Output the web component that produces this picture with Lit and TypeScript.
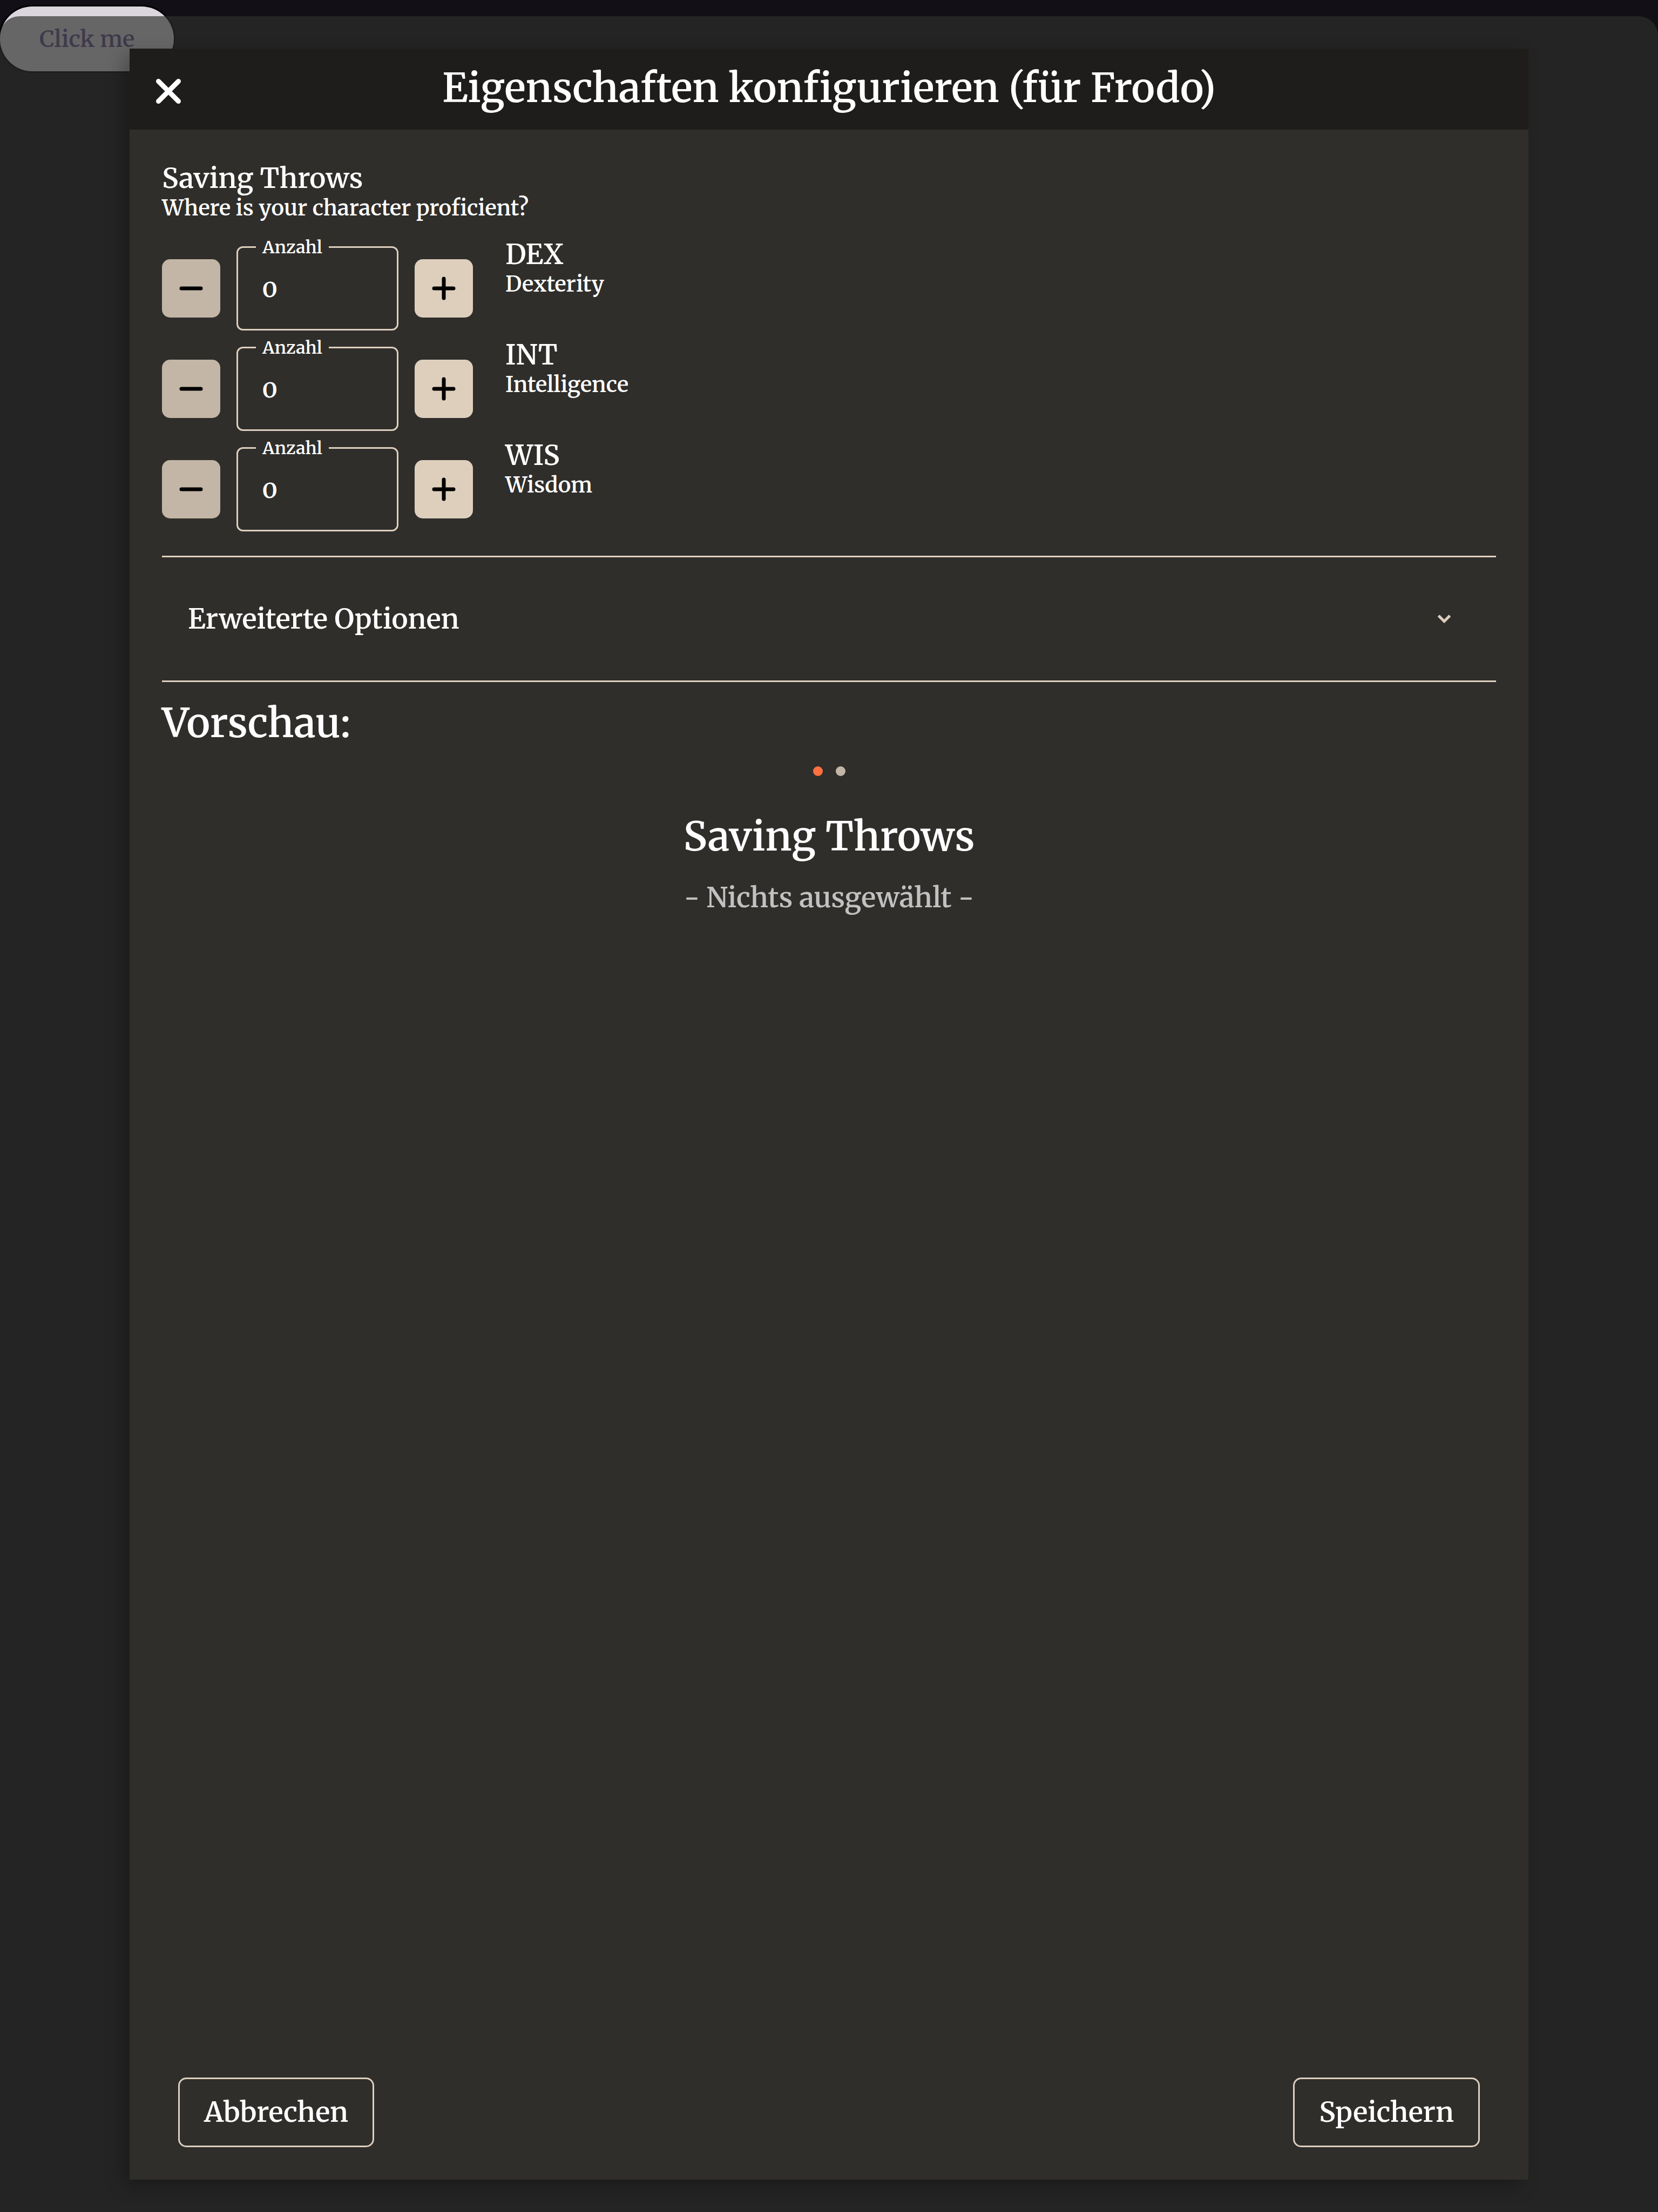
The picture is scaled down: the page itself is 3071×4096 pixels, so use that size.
import { LitElement, html, css } from "lit";
import { customElement, property, state } from "lit/decorators.js";

const FONT = css`"Merriweather", "DejaVu Serif Condensed", "DejaVu Serif", serif`;

/** A numeric field with a notched outline and buttons on both sides. */
@customElement("count-stepper")
class CountStepper extends LitElement {
  @property() name = "";
  @property({ type: Number }) value = 0;

  static styles = css`
    :host {
      display: block;
      flex: none;
    }
    .stepper {
      display: flex;
      align-items: center;
      gap: 30px;
      padding: 15px 0;
    }
    .step {
      display: flex;
      align-items: center;
      justify-content: center;
      width: 108px;
      height: 108px;
      margin: 0;
      padding: 0;
      border: 0;
      border-radius: 15px;
      background: #decfbd;
      color: #000;
    }
    .step:disabled {
      background: #c3b6a6;
    }
    .step svg {
      width: 60px;
      height: 60px;
    }
    .field {
      position: relative;
      box-sizing: border-box;
      width: 300px;
      height: 156px;
      border: 3px solid #decfbd;
      border-radius: 12px;
    }
    .label {
      position: absolute;
      top: -20px;
      left: 33px;
      padding: 0 12px;
      background: #2f2e2b;
      color: #fff;
      font: 600 32px/38px ${FONT};
    }
    .input {
      box-sizing: border-box;
      width: 100%;
      height: 100%;
      margin: 0;
      padding: 0 44px;
      border: 0;
      outline: 0;
      background: transparent;
      color: #fff;
      font: 600 46px/60px ${FONT};
      font-variant-numeric: oldstyle-nums;
    }
  `;

  private change(by: number) {
    this.value = Math.max(0, this.value + by);
  }

  render() {
    return html`
      <div class="stepper">
        <button
          class="step"
          aria-label="Weniger ${this.name}"
          ?disabled=${this.value === 0}
          @click=${() => this.change(-1)}
        >
          <svg viewBox="0 0 60 60" fill="none" stroke="currentColor" stroke-width="7" stroke-linecap="round" aria-hidden="true">
            <path d="M12 30H48" />
          </svg>
        </button>
        <div class="field">
          <label class="label" for="count">Anzahl</label>
          <input class="input" id="count" type="text" inputmode="numeric" .value=${String(this.value)} />
        </div>
        <button class="step" aria-label="Mehr ${this.name}" @click=${() => this.change(1)}>
          <svg viewBox="0 0 60 60" fill="none" stroke="currentColor" stroke-width="7" stroke-linecap="round" aria-hidden="true">
            <path d="M12 30H48M30 12V48" />
          </svg>
        </button>
      </div>
    `;
  }
}

interface Throw {
  short: string;
  long: string;
}

@customElement("app-root")
class AppRoot extends LitElement {
  @state() private expanded = false;
  @state() private page = 0;

  private throws: Throw[] = [
    { short: "DEX", long: "Dexterity" },
    { short: "INT", long: "Intelligence" },
    { short: "WIS", long: "Wisdom" },
  ];

  static styles = css`
    :host {
      display: block;
      color: #fff;
      font-family: ${FONT};
      font-weight: 600;
    }
    button {
      margin: 0;
      font-family: inherit;
      font-weight: inherit;
      color: inherit;
    }
    h1,
    h2,
    h3,
    p,
    ul {
      margin: 0;
      padding: 0;
      font-weight: inherit;
      list-style: none;
    }
    .screen {
      display: grid;
      min-height: 100vh;
      background: #121016;
    }
    .screen > * {
      grid-area: 1 / 1;
    }
    .open {
      justify-self: start;
      align-self: start;
      height: 120px;
      margin-top: 12px;
      padding: 0 73px;
      border: 0;
      border-radius: 60px;
      background: #dbd6dd;
      box-shadow: 0 0 0 3px #000;
      color: #62528a;
      font-size: 42px;
      line-height: 60px;
    }
    .sheet {
      display: flex;
      margin-top: 30px;
      padding: 60px 240px;
      border-radius: 36px 36px 0 0;
      background: rgba(45, 46, 43, 0.665);
    }
    .modal {
      display: flex;
      flex: 1;
      flex-direction: column;
      background: #2f2e2b;
      box-shadow: -12px 12px 30px rgba(0, 0, 0, 0.25);
    }
    .header {
      display: grid;
      grid-template-columns: 144px 1fr 144px;
      align-items: center;
      height: 150px;
      background: #1e1d1b;
    }
    .close {
      display: flex;
      justify-content: center;
      padding: 8px 0 0;
      border: 0;
      background: none;
    }
    .close svg {
      width: 60px;
      height: 60px;
    }
    .title {
      padding-bottom: 4px;
      text-align: center;
    }
    .large {
      font-size: 74px;
      line-height: 92px;
    }
    .medium {
      font-size: 51px;
      line-height: 60px;
    }
    .small {
      font-size: 40px;
      line-height: 51px;
    }
    .body {
      display: flex;
      flex: 1;
      flex-direction: column;
      padding: 60px;
    }
    .rows {
      margin: 30px 0;
    }
    .row {
      display: flex;
      align-items: flex-start;
      gap: 60px;
    }
    .more {
      display: flex;
      align-items: center;
      justify-content: space-between;
      width: 100%;
      height: 234px;
      padding: 0 72px 0 48px;
      border: solid #decfbd;
      border-width: 3px 0;
      background: none;
    }
    .more svg {
      width: 48px;
      height: 48px;
    }
    .preview {
      margin-top: 30px;
    }
    .slide {
      display: flex;
      flex-direction: column;
      align-items: center;
    }
    .dots {
      display: flex;
      gap: 24px;
      padding: 34px 0 66px;
    }
    .dot {
      width: 18px;
      height: 18px;
      padding: 0;
      border: 0;
      border-radius: 50%;
      background: #c3b6a6;
    }
    .dot.active {
      background: #ff7040;
    }
    .empty {
      margin-top: 37px;
      color: #c1c1c1;
    }
    .footer {
      display: flex;
      justify-content: space-between;
      margin-top: auto;
      padding: 0 30px;
    }
    .action {
      height: 129px;
      padding: 0 45px 2px;
      border: 3px solid #decfbd;
      border-radius: 15px;
      background: none;
    }
  `;

  render() {
    return html`
      <div class="screen">
        <button class="open">Click me</button>
        <div class="sheet">
          <div class="modal" role="dialog" aria-labelledby="title">
            <div class="header">
              <button class="close" aria-label="Schließen">
                <svg viewBox="0 0 60 60" fill="none" stroke="#fff" stroke-width="9" stroke-linecap="round" aria-hidden="true">
                  <path d="M11.500 11.500L48.500 48.500M48.500 11.500L11.500 48.500" />
                </svg>
              </button>
              <h1 class="title large" id="title">Eigenschaften konfigurieren (für Frodo)</h1>
            </div>
            <div class="body">
              <h2 class="medium">Saving Throws</h2>
              <p class="small">Where is your character proficient?</p>
              <ul class="rows">
                ${this.throws.map(
                  (t) => html`
                    <li class="row">
                      <count-stepper name=${t.long}></count-stepper>
                      <div>
                        <h3 class="medium">${t.short}</h3>
                        <p class="small">${t.long}</p>
                      </div>
                    </li>
                  `,
                )}
              </ul>
              <button
                class="more medium"
                aria-expanded=${this.expanded ? "true" : "false"}
                @click=${() => (this.expanded = !this.expanded)}
              >
                <span>Erweiterte Optionen</span>
                <svg viewBox="0 0 48 48" fill="none" stroke="#decfbd" stroke-width="5" aria-hidden="true">
                  <path d="M13.500 18L24 28.500L34.500 18" />
                </svg>
              </button>
              <h2 class="preview large">Vorschau:</h2>
              <div class="slide">
                <div class="dots">
                  ${[0, 1].map(
                    (i) => html`<button
                      class="dot ${i === this.page ? "active" : ""}"
                      aria-label="Seite ${i + 1}"
                      @click=${() => (this.page = i)}
                    ></button>`,
                  )}
                </div>
                <h3 class="large">Saving Throws</h3>
                <p class="empty medium">- Nichts ausgewählt -</p>
              </div>
              <div class="footer">
                <button class="action medium">Abbrechen</button>
                <button class="action medium">Speichern</button>
              </div>
            </div>
          </div>
        </div>
      </div>
    `;
  }
}
